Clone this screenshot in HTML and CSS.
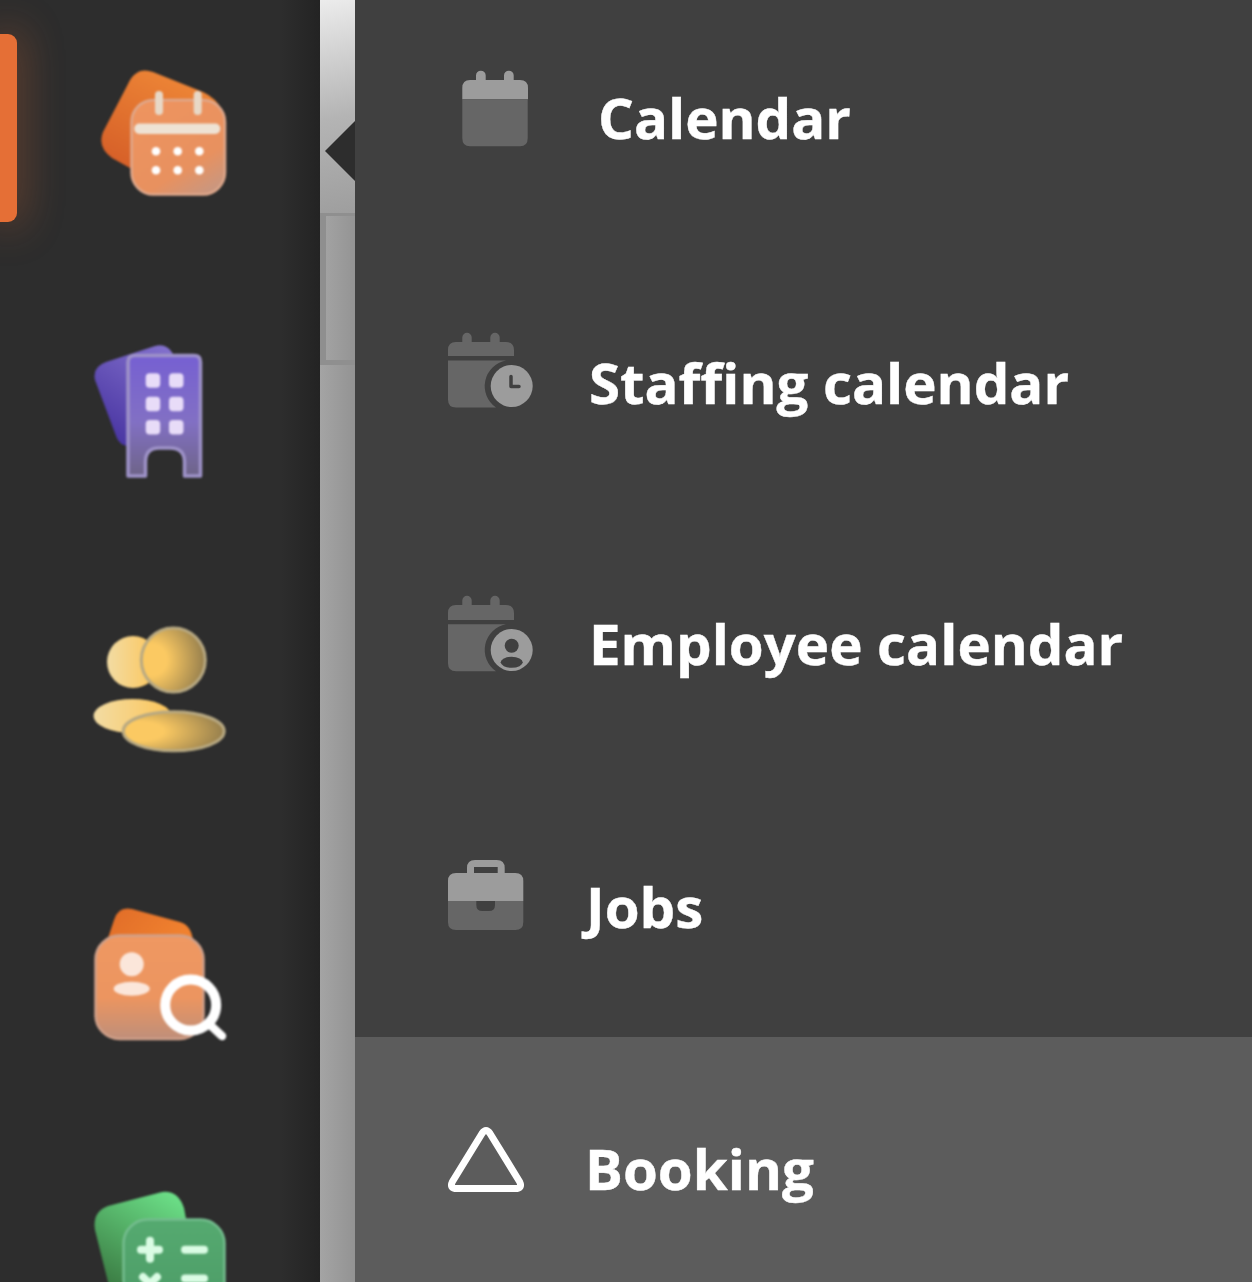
FILE: index.html
```html
<!DOCTYPE html>
<html lang="en">
<head>
<meta charset="utf-8">
<title>Menu</title>
<link rel="stylesheet" href="styles.css">
</head>
<body>
<div class="app">
  <nav class="rail">
    <div class="rail-marker"></div>
    <svg class="rail-icon" viewBox="90 60 140 150">
      <defs>
        <linearGradient id="calBack" x1="0.8" y1="0" x2="0.2" y2="1"><stop offset="0" stop-color="#f08a38"/><stop offset="1" stop-color="#d65f28"/></linearGradient>
        <linearGradient id="calFront" x1="0.2" y1="0" x2="0.8" y2="1"><stop offset="0" stop-color="#ee945f"/><stop offset="0.7" stop-color="#e8915f"/><stop offset="1" stop-color="#c99780"/></linearGradient>
      </defs>
      <path d="M128 84 Q136 66 153 72 L203 92 Q216 98 222 110 L200 170 L130 168 L112 158 Q97 147 103 132 Z" fill="url(#calBack)"/>
      <rect x="131.500" y="100" width="93.500" height="94.500" rx="22" fill="url(#calFront)" stroke="#dfa88c" stroke-width="2.500"/>
      <rect x="155" y="91" width="8" height="24" rx="4" fill="#e8d8c6"/>
      <rect x="193.700" y="91" width="8" height="24" rx="4" fill="#e8d8c6"/>
      <rect x="134.300" y="123.500" width="86" height="10.500" rx="5" fill="#eee2d4"/>
      <g fill="#fff">
        <circle cx="156" cy="151.300" r="4.300"/><circle cx="177.700" cy="151.300" r="4.300"/><circle cx="199.300" cy="151.300" r="4.300"/>
        <circle cx="156" cy="170.300" r="4.300"/><circle cx="177.700" cy="170.300" r="4.300"/><circle cx="199.300" cy="170.300" r="4.300"/>
      </g>
    </svg>
    <svg class="rail-icon" viewBox="90 340 140 150">
      <defs>
        <linearGradient id="bldBack" x1="0.8" y1="0" x2="0.2" y2="1"><stop offset="0" stop-color="#8270cc"/><stop offset="1" stop-color="#4632a0"/></linearGradient>
        <linearGradient id="bldFront" x1="0" y1="0" x2="0" y2="1"><stop offset="0" stop-color="#7660d2"/><stop offset="0.55" stop-color="#8270c4"/><stop offset="1" stop-color="#6e6488"/></linearGradient>
      </defs>
      <path d="M106 362 L155 346 Q167 343 173 354 L180 400 L130 446 Q119 446 116 436 L95 380 Q92 367 106 362Z" fill="url(#bldBack)"/>
      <path d="M128 476 V362 Q128 355.500 135 355.500 H194 Q200.500 355.500 200.500 362 V476 H184.500 V462 Q184.500 448 170 448 H159 Q145.500 448 145.500 462 V476 Z" fill="url(#bldFront)" stroke="#9e92c8" stroke-width="3.500" stroke-linejoin="round"/>
      <g fill="#e8dcf8">
        <rect x="145.700" y="373.300" width="14.500" height="14.500" rx="4"/><rect x="169" y="373.300" width="14.500" height="14.500" rx="4"/>
        <rect x="145.700" y="396.700" width="14.500" height="14.500" rx="4"/><rect x="169" y="396.700" width="14.500" height="14.500" rx="4"/>
        <rect x="145.700" y="420" width="14.500" height="14.500" rx="4"/><rect x="169" y="420" width="14.500" height="14.500" rx="4"/>
      </g>
    </svg>
    <svg class="rail-icon" viewBox="90 620 140 150">
      <defs>
        <linearGradient id="pplBack" x1="0" y1="0" x2="1" y2="0"><stop offset="0" stop-color="#f2dca4"/><stop offset="1" stop-color="#fdc558"/></linearGradient>
        <radialGradient id="pplFront" cx="0.15" cy="0.5" r="1"><stop offset="0.25" stop-color="#fbc962"/><stop offset="1" stop-color="#7c6c48"/></radialGradient>
      </defs>
      <circle cx="133" cy="662" r="26" fill="url(#pplBack)"/>
      <ellipse cx="132.500" cy="716" rx="39" ry="17" fill="url(#pplBack)"/>
      <circle cx="173.300" cy="660" r="32" fill="url(#pplFront)" stroke="#b8a982" stroke-width="3"/>
      <ellipse cx="173.700" cy="731.300" rx="50.500" ry="19.500" fill="url(#pplFront)" stroke="#b8a982" stroke-width="3"/>
    </svg>
    <svg class="rail-icon" viewBox="90 900 140 150">
      <defs>
        <linearGradient id="pseBack" x1="0" y1="0" x2="1" y2="0.3"><stop offset="0" stop-color="#e06c28"/><stop offset="1" stop-color="#f0812f"/></linearGradient>
        <linearGradient id="pseFront" x1="0" y1="0" x2="0" y2="1"><stop offset="0" stop-color="#ef9862"/><stop offset="0.6" stop-color="#ec9560"/><stop offset="1" stop-color="#bf8f7a"/></linearGradient>
      </defs>
      <path d="M108 938 L114 920 Q118 906 132 909 L180 922 Q191 925 193 940Z" fill="url(#pseBack)"/>
      <rect x="95.500" y="935.500" width="108" height="103.500" rx="24" fill="url(#pseFront)" stroke="#cfa08a" stroke-width="2.500"/>
      <circle cx="131.700" cy="964.300" r="12" fill="#fbe6da"/>
      <ellipse cx="131.700" cy="988.700" rx="18" ry="7" fill="#fbe6da"/>
      <circle cx="190.700" cy="1005" r="25.500" fill="none" stroke="#fff" stroke-width="10"/>
      <path d="M208 1023 L222 1036" fill="none" stroke="#fff" stroke-width="8.500" stroke-linecap="round"/>
    </svg>
    <svg class="rail-icon" viewBox="90 1180 140 150">
      <defs>
        <linearGradient id="clcBack" x1="0.8" y1="0" x2="0.2" y2="1"><stop offset="0" stop-color="#6ce088"/><stop offset="1" stop-color="#3a7a42"/></linearGradient>
        <linearGradient id="clcFront" x1="0" y1="0" x2="0" y2="1"><stop offset="0" stop-color="#55aa70"/><stop offset="1" stop-color="#4c9a66"/></linearGradient>
      </defs>
      <path d="M108 1206 L162 1192 Q178 1190 184 1208 L190 1240 L110 1290 L95 1230 Q92 1212 108 1206Z" fill="url(#clcBack)"/>
      <rect x="123.500" y="1219.500" width="101" height="100" rx="24" fill="url(#clcFront)" stroke="#74bd8e" stroke-width="2.500"/>
      <g fill="none" stroke="#dafce4" stroke-width="8" stroke-linecap="round">
        <path d="M141 1249.700 H159 M150 1240.700 V1258.700"/>
        <path d="M185 1249.700 H204"/>
        <path d="M185 1278.500 H204"/>
        <path d="M143 1277 L157 1291 M157 1277 L143 1291"/>
      </g>
    </svg>
  </nav>
  <div class="divider">
    <div class="divider-top"></div>
    <div class="divider-box"><div class="divider-thumb"></div></div>
    <div class="divider-rest"></div>
    <div class="divider-notch"></div>
  </div>
  <main class="menu">
    <a class="menu-row menu-row-calendar">
      <svg class="menu-icon" viewBox="0 0 90 80">
        <path d="M14 9 V4.500 A4.700 4.700 0 0 1 23.700 4.500 V9 H42 V4.500 A4.700 4.700 0 0 1 51.700 4.500 V9 H58 Q66 9 66 17 V28.300 H0.300 V17 Q0.300 9 8 9Z" fill="#9c9c9c"/>
        <path d="M0.300 28.300 H65.700 V67 Q65.700 75.300 58 75.300 H8 Q0.300 75.300 0.300 67Z" fill="#666"/>
      </svg>
      <span class="menu-label">Calendar</span>
    </a>
    <a class="menu-row menu-row-staffing">
      <svg class="menu-icon" viewBox="0 1 90 80">
        <path d="M14.300 9 V4.500 A4.700 4.700 0 0 1 23.700 4.500 V9 H42.300 V4.500 A4.700 4.700 0 0 1 51.700 4.500 V9 H58 Q66 9 66 17 V23 H0 V17 Q0 9 8 9Z" fill="#666"/>
        <path d="M0 27.500 H58 A26 26 0 0 0 48 74.500 H8 Q0 74.500 0 66.500Z" fill="#666"/>
        <circle cx="63.700" cy="53" r="21" fill="#9c9c9c"/>
        <path d="M63 43.500 V53.500 H71" fill="none" stroke="#404040" stroke-width="3.500" stroke-linecap="round" stroke-linejoin="round"/>
      </svg>
      <span class="menu-label">Staffing calendar</span>
    </a>
    <a class="menu-row menu-row-employee">
      <svg class="menu-icon" viewBox="0 0 90 80">
        <defs><clipPath id="empClip"><circle cx="63.700" cy="54" r="21"/></clipPath></defs>
        <path d="M14.300 9 V4.500 A4.700 4.700 0 0 1 23.700 4.500 V9 H42.300 V4.500 A4.700 4.700 0 0 1 51.700 4.500 V9 H58 Q66 9 66 17 V24 H0 V17 Q0 9 8 9Z" fill="#666"/>
        <path d="M0 28.300 H58 A26 26 0 0 0 48 75.300 H8 Q0 75.300 0 67.300Z" fill="#666"/>
        <circle cx="63.700" cy="54" r="21" fill="#9c9c9c"/>
        <circle cx="63.700" cy="49.700" r="7" fill="#404040"/>
        <ellipse cx="63.700" cy="66.300" rx="11" ry="5.500" fill="#404040" clip-path="url(#empClip)"/>
      </svg>
      <span class="menu-label">Employee calendar</span>
    </a>
    <a class="menu-row menu-row-jobs">
      <svg class="menu-icon" viewBox="0 1 90 80">
        <path fill-rule="evenodd" d="M19 15 V10 Q19 2 27 2 H48.700 Q56.700 2 56.700 10 V15 H67.300 Q75.300 15 75.300 23 V43 H0 V23 Q0 15 8 15Z M26 15 H49.700 V9 H26Z" fill="#9c9c9c"/>
        <path d="M0 43 H75.300 V64 Q75.300 72 67.300 72 H8 Q0 72 0 64Z" fill="#666"/>
        <path d="M28.300 43 H47 V47 Q47 53 41 53 H34.300 Q28.300 53 28.300 47Z" fill="#404040"/>
      </svg>
      <span class="menu-label">Jobs</span>
    </a>
    <a class="menu-row menu-row-booking">
      <svg class="menu-icon" viewBox="0 0 90 80">
        <path d="M34 12.500 Q38 6.500 42 12.500 L71.500 60.500 Q75 67.500 67 67.500 L9 67.500 Q1 67.500 4.500 60.500 Z" fill="none" stroke="#fff" stroke-width="7" stroke-linejoin="round"/>
      </svg>
      <span class="menu-label">Booking</span>
    </a>
  </main>
</div>
</body>
</html>
```
FILE: styles.css
```css
html, body { margin: 0; height: 100%; background: #2d2d2d; overflow: hidden; }
.app { display: flex; height: 1282px; width: 1252px; overflow: hidden; font-family: "Open Sans", sans-serif; }

.rail { width: 320px; flex: none; position: relative; display: flex; flex-direction: column; gap: 130px; padding: 60px 0 0 90px; box-sizing: border-box; overflow: hidden; background: linear-gradient(90deg, #2d2d2d 88%, #232323 100%); }
.rail-marker { position: absolute; left: 0; top: 34px; width: 17px; height: 188px; background: #e56f36; border-radius: 0 9px 9px 0; box-shadow: 0 0 40px 4px rgba(229,111,54,.36); }
.rail-icon { width: 140px; height: 150px; flex: none; filter: blur(.8px); overflow: visible; }

.divider { width: 35px; flex: none; position: relative; display: flex; flex-direction: column; }
.divider-top { height: 213px; background: linear-gradient(168deg, #ececec 0%, #b4b4b4 55%, #9e9e9e 100%); }
.divider-box { height: 152px; box-sizing: border-box; padding: 3px 0 5px 6px; background: #8f8f8f; display: flex; }
.divider-thumb { flex: 1; background: linear-gradient(90deg, #a2a2a2, #949494); }
.divider-rest { flex: 1; background: linear-gradient(90deg, #a4a4a4, #939393); }
.divider-notch { position: absolute; right: 0; top: 121px; width: 0; height: 0; border-style: solid; border-width: 30.5px 30px 30.5px 0; border-color: transparent #2d2d2d transparent transparent; }

.menu { flex: 1; background: #404040; margin-top: -13px; display: flex; flex-direction: column; }
.menu-row { height: 262.5px; flex: none; display: flex; align-items: flex-start; box-sizing: border-box; padding: 84px 0 0 93px; }
.menu-icon { width: 90px; height: 80px; flex: none; overflow: visible; }
.menu-label { font-size: 56.4px; line-height: 76px; font-weight: 700; color: #fff; white-space: nowrap; -webkit-text-stroke: .4px #fff; }
.menu-row-calendar { padding-left: 107px; }
.menu-row-calendar .menu-label { margin: 9px 0 0 46px; }
.menu-row-staffing .menu-label { margin: 11px 0 0 51px; }
.menu-row-employee .menu-label { margin: 10px 0 0 51px; }
.menu-row-jobs .menu-label { margin: 10px 0 0 48px; }
.menu-row-booking { background: #5c5c5c; height: 250px; }
.menu-row-booking .menu-label { margin: 10px 0 0 47px; }
```
